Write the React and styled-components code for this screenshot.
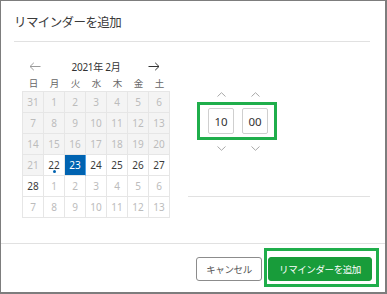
import React from "react";
import styled, { createGlobalStyle } from "styled-components";

const Global = createGlobalStyle`
  html, body { margin: 0; padding: 0; background: #fff; }
  body { font-family: "Noto Sans", "Noto Sans CJK JP", sans-serif; }
  * { box-sizing: border-box; }
`;

const Dialog = styled.div`
  width: 387px;
  height: 294px;
  border-style: solid;
  border-color: #7d7d7d;
  border-width: 1px 2px 2px 1px;
  display: flex;
  flex-direction: column;
  background: #fff;
`;

const Header = styled.div`
  height: 40px;
  display: flex;
  align-items: center;
  padding-left: 13px;
`;

const Title = styled.h1`
  margin: 0;
  font-weight: 400;
  font-size: 12.5px;
  letter-spacing: -0.6px;
  color: #3a3a3a;
  font-family: "Noto Sans CJK JP", sans-serif;
`;

const Rule = styled.div`
  height: 1px;
  background: #e1e1e1;
  margin: ${(p) => p.$margin || "0"};
`;

const Body = styled.div`
  flex: 1;
  display: flex;
  padding: 15px 0 0 21px;
`;

const Calendar = styled.div`
  width: 148px;
  display: flex;
  flex-direction: column;
`;

const Nav = styled.div`
  height: 18px;
  display: grid;
  grid-template-columns: 26px 1fr 26px;
  align-items: center;
`;

const NavArrow = styled.span`
  display: flex;
  justify-content: center;
  padding-right: ${(p) => (p.$right ? "6px" : "0")};
  color: ${(p) => (p.$dim ? "#9a9a9a" : "#333")};
`;

const Month = styled.span`
  text-align: center;
  font-size: 10px;
  letter-spacing: -0.3px;
  color: #333;
  font-family: "Noto Sans", "Noto Sans CJK JP", sans-serif;
`;

const Weekdays = styled.div`
  height: 16px;
  display: grid;
  grid-template-columns: repeat(7, 21px);
  align-items: center;
  padding-left: 1px;
`;

const Weekday = styled.span`
  text-align: center;
  font-size: 9.5px;
  color: #666;
  font-family: "Noto Sans CJK JP", sans-serif;
`;

const Grid = styled.div`
  display: grid;
  grid-template-columns: repeat(7, 21px);
  border-top: 1px solid #e6e6e6;
  border-left: 1px solid #e6e6e6;
  width: 148px;
`;

const Cell = styled.div`
  position: relative;
  height: 21px;
  display: flex;
  align-items: center;
  justify-content: center;
  border-right: 1px solid ${(p) => (p.$selected ? "#4aa0e6" : "#e6e6e6")};
  border-bottom: 1px solid #e6e6e6;
  font-size: 10px;
  background: ${(p) => (p.$selected ? "#0063b1" : p.$past ? "#f4f4f4" : "#fff")};
  color: ${(p) => (p.$selected ? "#fff" : p.$muted ? "#bcbcbc" : "#3a3a3a")};
`;

const Dot = styled.span`
  position: absolute;
  bottom: 2px;
  left: 50%;
  width: 3px;
  height: 3px;
  margin-left: -1.5px;
  background: #0063b1;
  border-radius: 50%;
`;

const Side = styled.div`
  flex: 1;
  display: flex;
  flex-direction: column;
  padding: 31px 15px 0 18px;
`;

const TimeArea = styled.div`
  display: flex;
  flex-direction: column;
  padding-left: 9px;
  height: 108px;
`;

const ChevronRow = styled.div`
  display: flex;
  gap: 8px;
  padding-left: 11px;
  height: 12px;
  align-items: center;
`;

const ChevronSlot = styled.span`
  width: 26px;
  display: flex;
  justify-content: center;
`;

const TimeBox = styled.div`
  width: 80px;
  height: 38px;
  border: 3px solid #1fae4b;
  display: flex;
  align-items: center;
  gap: 8px;
  padding-left: 8px;
  margin: 2px 0;
`;

const TimeInput = styled.div`
  width: 26px;
  height: 26px;
  border: 1px solid #cfcfcf;
  border-radius: 2px;
  display: flex;
  align-items: center;
  justify-content: center;
  font-size: 11.5px;
  color: #333;
`;

const Footer = styled.div`
  height: 48px;
  display: flex;
  justify-content: flex-end;
  align-items: flex-start;
  gap: 2px;
  padding: 4px 6px 0 0;
`;

const Button = styled.button`
  height: 24px;
  border-radius: 3px;
  font-family: "Noto Sans CJK JP", sans-serif;
  font-size: 9.5px;
  letter-spacing: -0.4px;
  padding: 0;
  cursor: pointer;
  border: 1px solid ${(p) => (p.$primary ? "#189c3a" : "#8c8c8c")};
  background: ${(p) => (p.$primary ? "#189c3a" : "#fff")};
  color: ${(p) => (p.$primary ? "#fff" : "#555")};
  width: ${(p) => (p.$primary ? "104px" : "66px")};
  margin-top: ${(p) => (p.$primary ? "0" : "9px")};
`;

const Highlight = styled.div`
  border: 3px solid #1fae4b;
  padding: 6px 4px 3px 1px;
  display: flex;
`;

const ArrowIcon = ({ dir }) => (
  <svg width="12" height="9" viewBox="0 0 12 9" fill="none" stroke="currentColor" strokeWidth="1">
    {dir === "left" ? (
      <path d="M11.5 4.5H1M4.8 0.8L1 4.5l3.8 3.7" />
    ) : (
      <path d="M0.5 4.5H11M7.2 0.8L11 4.5 7.2 8.2" />
    )}
  </svg>
);

const Chevron = ({ up }) => (
  <svg width="9" height="5" viewBox="0 0 9 5" fill="none" stroke="#a8a8a8" strokeWidth="1">
    {up ? <path d="M0.5 4.5L4.5 0.7 8.5 4.5" /> : <path d="M0.5 0.5L4.5 4.3 8.5 0.5" />}
  </svg>
);

const weekdays = ["日", "月", "火", "水", "木", "金", "土"];

const rows = [
  [31, 1, 2, 3, 4, 5, 6],
  [7, 8, 9, 10, 11, 12, 13],
  [14, 15, 16, 17, 18, 19, 20],
  [21, 22, 23, 24, 25, 26, 27],
  [28, 1, 2, 3, 4, 5, 6],
  [7, 8, 9, 10, 11, 12, 13],
];

function cellState(r, c) {
  const past = r < 3 || (r === 3 && c === 0);
  const nextMonth = r >= 4 && !(r === 4 && c === 0);
  return {
    past,
    muted: past || nextMonth,
    selected: r === 3 && c === 2,
    dot: r === 3 && c === 1,
  };
}

export default function App() {
  return (
    <>
      <Global />
      <Dialog>
        <Header>
          <Title>リマインダーを追加</Title>
        </Header>
        <Rule $margin="0 15px 0 13px" />
        <Body>
          <Calendar>
            <Nav>
              <NavArrow $dim>
                <ArrowIcon dir="left" />
              </NavArrow>
              <Month>2021年 2月</Month>
              <NavArrow $right>
                <ArrowIcon dir="right" />
              </NavArrow>
            </Nav>
            <Weekdays>
              {weekdays.map((w) => (
                <Weekday key={w}>{w}</Weekday>
              ))}
            </Weekdays>
            <Grid>
              {rows.map((row, r) =>
                row.map((d, c) => {
                  const s = cellState(r, c);
                  return (
                    <Cell key={`${r}-${c}`} $past={s.past} $muted={s.muted} $selected={s.selected}>
                      {d}
                      {s.dot && <Dot />}
                    </Cell>
                  );
                })
              )}
            </Grid>
          </Calendar>
          <Side>
            <TimeArea>
              <ChevronRow>
                <ChevronSlot><Chevron up /></ChevronSlot>
                <ChevronSlot><Chevron up /></ChevronSlot>
              </ChevronRow>
              <TimeBox>
                <TimeInput>10</TimeInput>
                <TimeInput>00</TimeInput>
              </TimeBox>
              <ChevronRow>
                <ChevronSlot><Chevron /></ChevronSlot>
                <ChevronSlot><Chevron /></ChevronSlot>
              </ChevronRow>
            </TimeArea>
            <Rule />
          </Side>
        </Body>
        <Rule />
        <Footer>
          <Button>キャンセル</Button>
          <Highlight>
            <Button $primary>リマインダーを追加</Button>
          </Highlight>
        </Footer>
      </Dialog>
    </>
  );
}
